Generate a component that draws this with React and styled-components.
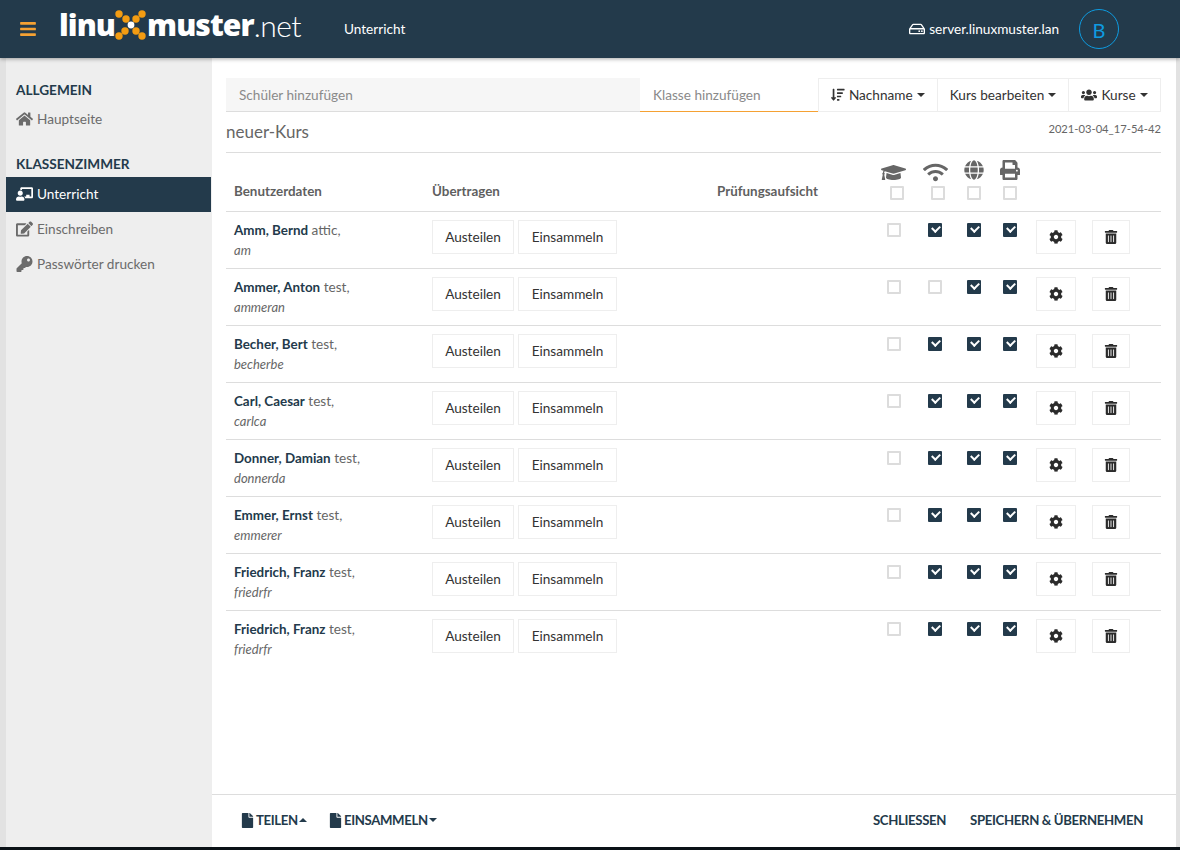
import React from "react";
import styled, { createGlobalStyle } from "styled-components";
import {
  FaHome,
  FaEdit,
  FaKey,
  FaChalkboardTeacher,
  FaRegHdd,
  FaSortAmountDown,
  FaUsers,
  FaGraduationCap,
  FaWifi,
  FaGlobe,
  FaPrint,
  FaCog,
  FaTrashAlt,
  FaFile,
  FaBars,
} from "react-icons/fa";

const GlobalStyle = createGlobalStyle`
  html, body {
    margin: 0;
    padding: 0;
    background: #0b1217;
    font-family: "Lato", "Liberation Sans", sans-serif;
    font-size: 13.6px;
  }
  * { box-sizing: border-box; }
`;

const Page = styled.div`
  width: 1180px;
  height: 847px;
  display: flex;
  flex-direction: column;
  background: #e2e2e2;
  overflow: hidden;
`;

const Header = styled.header`
  height: 58px;
  flex: none;
  display: flex;
  align-items: center;
  background: #233a4b;
  color: #fff;
  box-shadow: 0 1px 4px rgba(0, 0, 0, 0.35);
  position: relative;
  z-index: 2;
`;

const MenuIcon = styled(FaBars)`
  color: #f5a133;
  font-size: 18px;
  margin-left: 19px;
`;

const Logo = styled.div`
  display: flex;
  align-items: center;
  flex: none;
  margin-left: 22px;
  padding-bottom: 8px;
  width: 244px;
  font-family: "Open Sans", sans-serif;
  font-size: 30px;
  font-weight: 800;
  letter-spacing: -0.9px;
  line-height: 1;
`;

const LogoMarkSvg = styled.svg`
  flex: none;
  margin-left: -1px;
`;

const LogoNet = styled.span`
  font-family: "Lato", sans-serif;
  font-weight: 300;
  font-size: 30px;
  letter-spacing: -0.5px;
`;

const HeaderTitle = styled.div`
  margin-left: 41px;
`;

const ServerName = styled.div`
  margin-left: auto;
  display: flex;
  align-items: center;
  gap: 4px;
`;

const Avatar = styled.div`
  width: 40px;
  height: 40px;
  margin: 0 61px 0 20px;
  border-radius: 50%;
  border: 1px solid #0e9be0;
  color: #0e9be0;
  font-size: 20px;
  padding-top: 2px;
  display: flex;
  align-items: center;
  justify-content: center;
`;

const Body = styled.div`
  flex: 1;
  min-height: 0;
  display: flex;
  margin: 0 4px 0 6px;
`;

const Sidebar = styled.nav`
  width: 206px;
  flex: none;
  background: #eeeeee;
  padding-top: 23px;
  padding-right: 1px;
`;

const SideTitle = styled.div`
  height: 19px;
  margin: ${(p) => (p.$first ? "0 0 2px" : "17px 0 4px")};
  padding-left: 10px;
  font-weight: 700;
  line-height: ${(p) => (p.$first ? "19px" : "21px")};
  color: #233a4b;
  text-transform: uppercase;
`;

const SideItem = styled.a`
  height: 35px;
  display: flex;
  align-items: center;
  gap: 4px;
  padding: 0 0 1px 10px;
  color: ${(p) => (p.$active ? "#fff" : "#6b6b6b")};
  background: ${(p) => (p.$active ? "#233a4b" : "transparent")};

  svg {
    width: 17px;
    font-size: 16px;
  }
`;

const Main = styled.main`
  flex: 1;
  min-width: 0;
  display: flex;
  flex-direction: column;
  background: #fff;
`;

const Content = styled.div`
  flex: 1;
  padding: 20px 15px 0 14px;
`;

const Toolbar = styled.div`
  display: flex;
  height: 34px;
`;

const TextInput = styled.input`
  flex: none;
  width: ${(p) => p.$width}px;
  height: 34px;
  border: 0;
  border-bottom: 1px solid ${(p) => (p.$focus ? "#f5a133" : "#dddddd")};
  background: ${(p) => (p.$focus ? "#fff" : "#f6f6f6")};
  padding: 0 13px;
  font: inherit;
  outline: none;

  &::placeholder {
    color: #8a8a8a;
    opacity: 1;
  }
`;

const ToolButton = styled.button`
  flex: none;
  width: ${(p) => p.$width}px;
  height: 34px;
  margin-left: ${(p) => (p.$first ? "0" : "-1px")};
  padding: 0;
  display: flex;
  align-items: center;
  justify-content: center;
  gap: 4px;
  background: #fff;
  border: 1px solid #eeeeee;
  color: #333;
  font: inherit;
  line-height: 19px;
`;

const Caret = styled.span`
  display: inline-block;
  width: 0;
  height: 0;
  margin-left: ${(p) => p.$gap ?? 0}px;
  border-left: 4px solid transparent;
  border-right: 4px solid transparent;
  border-top: ${(p) => (p.$up ? "0" : "4px solid currentColor")};
  border-bottom: ${(p) => (p.$up ? "4px solid currentColor" : "0")};
`;

const TitleRow = styled.div`
  height: 41px;
  display: flex;
  justify-content: space-between;
  border-bottom: 1px solid #dddddd;
`;

const CourseName = styled.div`
  margin-top: 10px;
  font-size: 17px;
  line-height: 20px;
  color: #666;
`;

const Stamp = styled.div`
  margin-top: 9px;
  font-size: 11.2px;
  line-height: 15px;
  color: #666;
`;

const gridColumns = "198px 285px 164px 44px 38px 37px 36px 56px 77px";

const HeadRow = styled.div`
  display: grid;
  grid-template-columns: ${gridColumns};
  height: 59px;
  border-bottom: 1px solid #dddddd;
`;

const HeadText = styled.div`
  padding-left: 8px;
  padding-top: 30px;
  font-weight: 700;
  font-size: 13.4px;
  line-height: 17px;
  color: #5f5f5f;
`;

const HeadIcon = styled.div`
  height: 33px;
  padding-top: 7px;
  padding-left: ${(p) => p.$pad}px;
  color: #666;
  font-size: ${(p) => p.$size}px;
  line-height: 0;
`;

const Row = styled.div`
  display: grid;
  grid-template-columns: ${gridColumns};
  height: 57px;
  padding-top: 8px;
  border-bottom: ${(p) => (p.$last ? "0" : "1px solid #dddddd")};
`;

const UserCell = styled.div`
  padding-left: 8px;
  line-height: 20px;
  color: #666;
`;

const UserName = styled.strong`
  color: #233a4b;
  font-size: 13.4px;
`;

const UserLogin = styled.div`
  font-style: italic;
  font-size: 13px;
`;

const TransferCell = styled.div`
  display: flex;
  gap: 4px;
  padding-left: 8px;
`;

const Button = styled.button`
  flex: none;
  width: ${(p) => p.$width}px;
  height: 34px;
  padding: 0;
  background: #fff;
  border: 1px solid #eeeeee;
  color: #333;
  font: inherit;
  line-height: 19px;
  display: flex;
  align-items: center;
  justify-content: center;
`;

const IconButton = styled(Button)`
  margin-left: 8px;
  color: #2b2b2b;
  font-size: 14px;
`;

const Check = styled.input.attrs({ type: "checkbox" })`
  appearance: none;
  display: block;
  position: relative;
  width: 14px;
  height: 14px;
  margin: ${(p) => p.$top ?? 3}px 0 0 ${(p) => p.$pad}px;
  border: 2px solid #dcdcdc;
  border-radius: 1px;
  background: #fff;

  &:checked {
    background: #233a4b;
    border-color: #233a4b;
  }

  &:checked::after {
    content: "";
    position: absolute;
    left: 2px;
    top: 0;
    width: 6px;
    height: 4px;
    border-left: 2px solid #fff;
    border-bottom: 2px solid #fff;
    transform: rotate(-45deg);
  }
`;

const Footer = styled.footer`
  height: 53px;
  flex: none;
  display: flex;
  align-items: center;
  padding: 0 33px 2px 28px;
  border-top: 1px solid #dddddd;
  color: #233a4b;
  font-weight: 700;
  font-size: 13.2px;
  letter-spacing: -0.35px;
  text-transform: uppercase;
`;

const FooterAction = styled.span`
  display: flex;
  align-items: center;
  margin-left: ${(p) => p.$gap ?? 0}px;
`;

const FileIcon = styled(FaFile)`
  font-size: 15px;
  margin-right: 1px;
`;

const Spacer = styled.div`
  flex: 1;
`;

const headIcons = [
  { Icon: FaGraduationCap, size: 25, pad: 8, box: 17 },
  { Icon: FaWifi, size: 25, pad: 6, box: 14 },
  { Icon: FaGlobe, size: 20, pad: 9, box: 12 },
  { Icon: FaPrint, size: 20, pad: 8, box: 11 },
];

const rowPads = [14, 11, 12, 11];

const users = [
  { name: "Amm, Bernd", group: "attic", login: "am", checks: [false, true, true, true] },
  { name: "Ammer, Anton", group: "test", login: "ammeran", checks: [false, false, true, true] },
  { name: "Becher, Bert", group: "test", login: "becherbe", checks: [false, true, true, true] },
  { name: "Carl, Caesar", group: "test", login: "carlca", checks: [false, true, true, true] },
  { name: "Donner, Damian", group: "test", login: "donnerda", checks: [false, true, true, true] },
  { name: "Emmer, Ernst", group: "test", login: "emmerer", checks: [false, true, true, true] },
  { name: "Friedrich, Franz", group: "test", login: "friedrfr", checks: [false, true, true, true] },
  { name: "Friedrich, Franz", group: "test", login: "friedrfr", checks: [false, true, true, true] },
];

// Punkte des X im Logo
const logoDots = [
  [5, 5], [28, 5], [12, 10], [22, 10], [11, 22], [22, 22], [5, 27], [28, 27],
];

const LogoMark = () => (
  <LogoMarkSvg width="33" height="33" viewBox="0 0 33 33">
    {logoDots.map(([cx, cy]) => (
      <circle key={`${cx}-${cy}`} cx={cx} cy={cy} r="3.7" fill="#f39c12" />
    ))}
    <circle cx="17" cy="16" r="3.4" fill="#fff" />
  </LogoMarkSvg>
);

const App = () => (
  <Page>
    <GlobalStyle />
    <Header>
      <MenuIcon />
      <Logo>
        linu
        <LogoMark />
        muster<LogoNet>.net</LogoNet>
      </Logo>
      <HeaderTitle>Unterricht</HeaderTitle>
      <ServerName>
        <FaRegHdd size={16} />
        server.linuxmuster.lan
      </ServerName>
      <Avatar>B</Avatar>
    </Header>
    <Body>
      <Sidebar>
        <SideTitle $first>Allgemein</SideTitle>
        <SideItem><FaHome />Hauptseite</SideItem>
        <SideTitle>Klassenzimmer</SideTitle>
        <SideItem $active><FaChalkboardTeacher />Unterricht</SideItem>
        <SideItem><FaEdit />Einschreiben</SideItem>
        <SideItem><FaKey />Passwörter drucken</SideItem>
      </Sidebar>
      <Main>
        <Content>
          <Toolbar>
            <TextInput $width={414} placeholder="Schüler hinzufügen" />
            <TextInput $width={178} $focus placeholder="Klasse hinzufügen" />
            <ToolButton $first $width={120}><FaSortAmountDown />Nachname<Caret /></ToolButton>
            <ToolButton $width={132}>Kurs bearbeiten<Caret /></ToolButton>
            <ToolButton $width={93}><FaUsers size={16} />Kurse<Caret /></ToolButton>
          </Toolbar>
          <TitleRow>
            <CourseName>neuer-Kurs</CourseName>
            <Stamp>2021-03-04_17-54-42</Stamp>
          </TitleRow>
          <HeadRow>
            <HeadText>Benutzerdaten</HeadText>
            <HeadText>Übertragen</HeadText>
            <HeadText>Prüfungsaufsicht</HeadText>
            {headIcons.map(({ Icon, size, pad, box }) => (
              <div key={pad + box}>
                <HeadIcon $size={size} $pad={pad}><Icon /></HeadIcon>
                <Check $top={0} $pad={box} />
              </div>
            ))}
          </HeadRow>
          {users.map((user, index) => (
            <Row key={index} $last={index === users.length - 1}>
              <UserCell>
                <UserName>{user.name}</UserName> {user.group},
                <UserLogin>{user.login}</UserLogin>
              </UserCell>
              <TransferCell>
                <Button $width={82}>Austeilen</Button>
                <Button $width={99}>Einsammeln</Button>
              </TransferCell>
              <div />
              {user.checks.map((checked, i) => (
                <div key={i}>
                  <Check $pad={rowPads[i]} defaultChecked={checked} />
                </div>
              ))}
              <div><IconButton $width={40}><FaCog /></IconButton></div>
              <div><IconButton $width={38}><FaTrashAlt /></IconButton></div>
            </Row>
          ))}
        </Content>
        <Footer>
          <FooterAction><FileIcon />Teilen<Caret $up $gap={1} /></FooterAction>
          <FooterAction $gap={21}><FileIcon />Einsammeln<Caret $gap={1} /></FooterAction>
          <Spacer />
          <FooterAction>Schliessen</FooterAction>
          <FooterAction $gap={24}>Speichern &amp; Übernehmen</FooterAction>
        </Footer>
      </Main>
    </Body>
  </Page>
);

export default App;
